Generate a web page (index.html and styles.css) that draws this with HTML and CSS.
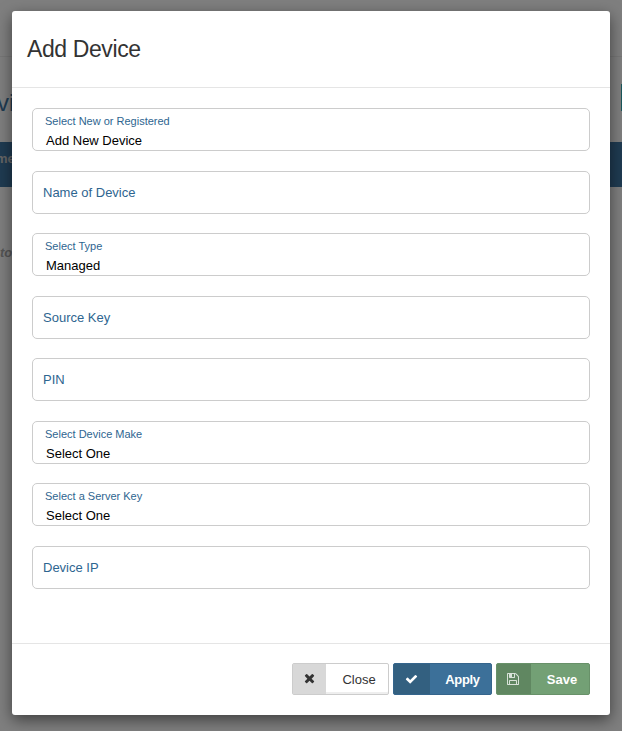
FILE: index.html
```html
<!DOCTYPE HTML>
<html>
	<head>
		<meta charset="utf-8"/>
		<title>Add Device</title>
		<link rel="stylesheet" href="styles.css">
	</head>
	<body>
		<div class="page">
			<div class="page-top"></div>
			<div class="page-title">
				<span>vi</span>
				<span class="page-btn"></span>
			</div>
			<div class="page-bar">me</div>
			<div class="page-note">to</div>
		</div>
		<div class="backdrop"></div>

		<div class="modal">
			<div class="modal-header">
				<h4>Add Device</h4>
			</div>
			<div class="modal-body">
				<div class="field select-field">
					<label>Select New or Registered</label>
					<span class="value">Add New Device</span>
				</div>
				<div class="field text-field">Name of Device</div>
				<div class="field select-field">
					<label>Select Type</label>
					<span class="value">Managed</span>
				</div>
				<div class="field text-field">Source Key</div>
				<div class="field text-field">PIN</div>
				<div class="field select-field">
					<label>Select Device Make</label>
					<span class="value">Select One</span>
				</div>
				<div class="field select-field">
					<label>Select a Server Key</label>
					<span class="value">Select One</span>
				</div>
				<div class="field text-field">Device IP</div>
			</div>
			<div class="modal-footer">
				<button class="btn btn-close">
					<span class="btn-icon">
						<svg width="11" height="14" viewBox="0 0 1408 1792"><path fill="currentColor" d="M1298 1214q0 40-28 68l-136 136q-28 28-68 28t-68-28l-294-294-294 294q-28 28-68 28t-68-28l-136-136q-28-28-28-68t28-68l294-294-294-294q-28-28-28-68t28-68l136-136q28-28 68-28t68 28l294 294 294-294q28-28 68-28t68 28l136 136q28 28 28 68t-28 68l-294 294 294 294q28 28 28 68z"/></svg>
					</span>
					<span class="btn-text">Close</span>
				</button>
				<button class="btn btn-apply">
					<span class="btn-icon">
						<svg width="13" height="14" viewBox="0 0 1792 1792"><path fill="currentColor" d="M1671 566q0 40-28 68l-724 724-136 136q-28 28-68 28t-68-28l-136-136-362-362q-28-28-28-68t28-68l136-136q28-28 68-28t68 28l294 295 656-657q28-28 68-28t68 28l136 136q28 28 28 68z"/></svg>
					</span>
					<span class="btn-text">Apply</span>
				</button>
				<button class="btn btn-save">
					<span class="btn-icon">
						<svg width="12" height="14" viewBox="0 0 1536 1792"><path fill="currentColor" d="M384 1536h768v-384h-768v384zm896 0h128v-896q0-14-10-38.500t-20-34.500l-281-281q-10-10-34-20t-39-10v416q0 40-28 68t-68 28h-576q-40 0-68-28t-28-68v-416h-128v1280h128v-416q0-40 28-68t68-28h832q40 0 68 28t28 68v416zm-384-928v-320q0-13-9.500-22.500t-22.500-9.500h-192q-13 0-22.500 9.500t-9.500 22.500v320q0 13 9.500 22.500t22.500 9.500h192q13 0 22.500-9.500t9.500-22.500zm640 32v928q0 40-28 68t-68 28h-1344q-40 0-68-28t-28-68v-1344q0-40 28-68t68-28h928q40 0 88 20t76 48l280 280q28 28 48 76t20 88z"/></svg>
					</span>
					<span class="btn-text">Save</span>
				</button>
			</div>
		</div>
	</body>
</html>
```

FILE: styles.css
```css
html, body {
	margin: 0;
	height: 100%;
	overflow: hidden;
}
body {
	background: #fff;
	font-family: "Liberation Sans", Arial, sans-serif;
	position: relative;
}

/* page behind the dialog, only the edges show */
.page {
	height: 731px;
	overflow: hidden;
}
.page-top {
	height: 56px;
	border-bottom: 1px solid #eee;
}
.page-title {
	height: 85px;
	padding-top: 27px;
	box-sizing: border-box;
	display: flex;
	justify-content: space-between;
	align-items: flex-start;
	font-size: 24px;
	line-height: 38px;
	color: #3e76a4;
}
.page-btn {
	width: 1px;
	height: 27px;
	background: #35b0b8;
}
.page-title span:first-child {
	margin-left: -3px;
}
.page-bar {
	height: 45px;
	background: #3e76a4;
	color: #ccc;
	font-size: 13px;
	font-weight: bold;
	line-height: 33px;
	text-indent: -4px;
}
.page-note {
	margin-top: 58px;
	font-size: 13px;
	font-style: italic;
	font-weight: bold;
	color: #aaa;
}
.backdrop {
	position: absolute;
	inset: 0;
	background: rgba(0, 0, 0, 0.5);
}

.modal {
	position: absolute;
	left: 12px;
	top: 11px;
	width: 598px;
	height: 704px;
	display: flex;
	flex-direction: column;
	background: #fff;
	border-radius: 3px;
	box-shadow: 0 5px 15px rgba(0, 0, 0, 0.5);
}
.modal-header {
	height: 77px;
	box-sizing: border-box;
	border-bottom: 1px solid #e5e5e5;
	padding-left: 15px;
}
.modal-header h4 {
	margin: 0;
	padding-top: 23px;
	font-size: 23px;
	font-weight: 400;
	letter-spacing: -0.4px;
	line-height: 30px;
	color: #333;
}
.modal-body {
	flex: 1;
	display: flex;
	flex-direction: column;
	gap: 19.5px;
	padding: 20px 20px 0;
}
.field {
	height: 43px;
	flex: none;
	box-sizing: border-box;
	border: 1px solid #ccc;
	border-radius: 5px;
}
.text-field {
	padding: 0 10px;
	font-size: 13px;
	line-height: 41px;
	color: #2e6590;
}
.select-field {
	padding: 6px 12px 0;
}
.select-field label {
	display: block;
	font-size: 11px;
	line-height: 13px;
	color: #2e6590;
}
.select-field .value {
	display: block;
	margin-top: 5px;
	padding-left: 1px;
	font-size: 13px;
	line-height: 15px;
	color: #000;
}

.modal-footer {
	height: 72px;
	box-sizing: border-box;
	border-top: 1px solid #e5e5e5;
	display: flex;
	justify-content: flex-end;
	align-items: flex-start;
	gap: 4px;
	padding: 19px 20px 0;
}
.btn {
	height: 32px;
	padding: 0;
	border: 1px solid;
	border-radius: 2px;
	display: flex;
	align-items: stretch;
	font-family: inherit;
	font-size: 13px;
}
.btn-icon {
	display: flex;
	align-items: center;
	justify-content: center;
}
.btn-text {
	flex: 1;
	display: flex;
	align-items: center;
	justify-content: center;
	padding-left: 4px;
}
.btn-close {
	width: 97px;
	background: #fff;
	border-color: #ccc;
	color: #333;
	box-shadow: inset 0 -2px 0 #eee;
}
.btn-close .btn-icon {
	width: 33px;
	background: #d8d8d8;
	color: #333;
}
.btn-apply {
	width: 99px;
	background: #3c7099;
	border-color: #35658c;
	color: #fff;
	font-weight: bold;
	letter-spacing: -0.3px;
}
.btn-apply .btn-icon {
	width: 36px;
	padding-right: 2px;
	box-sizing: border-box;
	background: #336080;
}
.btn-save {
	width: 94px;
	background: #73a075;
	border-color: #689169;
	color: #fff;
	font-weight: bold;
}
.btn-save .btn-icon {
	width: 34px;
	padding-right: 3px;
	box-sizing: border-box;
	background: #608761;
	color: #d8e2d8;
}
```
